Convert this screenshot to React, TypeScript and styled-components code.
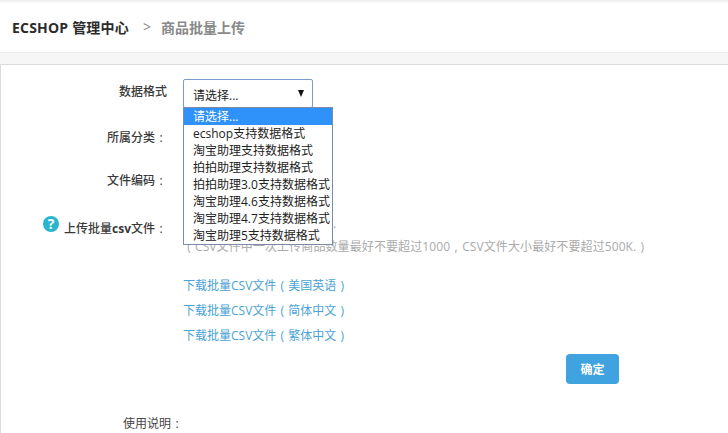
import React from "react";
import styled, { createGlobalStyle } from "styled-components";

const Global = createGlobalStyle`
  html, body { margin: 0; padding: 0; height: 433px; overflow: hidden; background: #f6f6f6; }
  body { font-family: "Open Sans", "Noto Sans CJK SC", sans-serif; font-size: 12px; color: #333; }
  * { box-sizing: border-box; }
`;

const Page = styled.div`
  width: 728px;
  height: 433px;
  padding-top: 2px;
  overflow: hidden;
  border-top: 1px solid #efefef;
`;

const Header = styled.header`
  height: 50px;
  background: #fff;
  border-bottom: 1px solid #efefef;
  display: flex;
  align-items: center;
  padding: 0 0 2px 12px;
  font-size: 14px;
`;

const Brand = styled.strong`
  color: #2b2b2b;
  font-weight: 700;
  letter-spacing: 0.2px;
`;

const Sep = styled.span`
  color: #888;
  margin: 0 10px 0 14px;
  font-weight: 400;
`;

const Crumb = styled.span`
  color: #8a8a8a;
  font-weight: 700;
`;

const Content = styled.main`
  margin-top: 11px;
  height: 380px;
  background: #fff;
  border-top: 1px solid #dcdcdc;
  border-left: 1px solid #dcdcdc;
  padding-top: 14px;
  display: flex;
  flex-direction: column;
`;

const Row = styled.div<{ $h: number }>`
  display: grid;
  grid-template-columns: 166px 1fr;
  column-gap: 16px;
  height: ${(p) => p.$h}px;
  flex-shrink: 0;
  position: relative;
`;

const Label = styled.label`
  text-align: right;
  color: #3a3a3a;
  line-height: 17px;
  font-weight: 500;
  padding-top: 4px;
`;

const Colon = styled.span`
  display: inline-block;
  width: 12px;
  text-align: center;
`;

const Latin = styled.span`
  font-weight: 700;
`;

const PlainLabel = styled(Label)`
  display: flex;
  justify-content: flex-end;
  align-items: center;
  gap: 5px;
  padding-top: 0;
`;

const Help = styled.span`
  width: 16px;
  height: 16px;
  border-radius: 50%;
  background: #2bb6cf;
  color: #fff;
  font-size: 14px;
  font-weight: 700;
  line-height: 16px;
  text-align: center;
  margin-top: -8px;
`;

const Select = styled.div`
  width: 130px;
  height: 29px;
  border: 1px solid #7a9cd3;
  border-radius: 2px;
  background: #fff;
  display: flex;
  justify-content: space-between;
  padding: 7px 8px 0 9px;
  line-height: 17px;
  color: #222;
`;

const Arrow = styled.span`
  width: 0;
  height: 0;
  margin: 3px 0 0 0;
  border-left: 3.5px solid transparent;
  border-right: 3.5px solid transparent;
  border-top: 7px solid #111;
`;

const Menu = styled.ul`
  position: absolute;
  z-index: 2;
  left: 182px;
  top: 28px;
  width: 150px;
  margin: 0;
  padding: 0;
  list-style: none;
  background: #fff;
  border: 1px solid #7f8aa8;
`;

const Option = styled.li<{ $active?: boolean }>`
  height: 17px;
  line-height: 17px;
  padding-left: 9px;
  white-space: nowrap;
  color: ${(p) => (p.$active ? "#fff" : "#222")};
  background: ${(p) => (p.$active ? "#2f92fb" : "transparent")};
`;

const Trail = styled.span`
  padding-left: 150px;
  color: #999;
  line-height: 12px;
`;

const Note = styled.p`
  margin: 0;
  padding-left: 182px;
  height: 39px;
  flex-shrink: 0;
  line-height: 17px;
  color: #aaa;
  white-space: nowrap;
  letter-spacing: 0.1px;
`;

const LinkList = styled.div`
  display: flex;
  flex-direction: column;
  padding-left: 182px;
  height: 77px;
  flex-shrink: 0;
`;

const Download = styled.a`
  height: 25px;
  flex-shrink: 0;
  line-height: 17px;
  color: #4aa3d6;
  text-decoration: none;
  white-space: nowrap;
`;

const Actions = styled.div`
  display: flex;
  padding-left: 565px;
  flex-shrink: 0;
`;

const Submit = styled.button`
  width: 53px;
  height: 30px;
  border: 0;
  border-radius: 4px;
  background: #3fa3df;
  color: #fff;
  font: 700 12px "Open Sans", "Noto Sans CJK SC", sans-serif;
  padding: 0;
`;

const UsageLabel = styled.div`
  margin-top: 31px;
  padding-left: 122px;
  color: #444;
  line-height: 17px;
`;

const options = [
  "请选择...",
  "ecshop支持数据格式",
  "淘宝助理支持数据格式",
  "拍拍助理支持数据格式",
  "拍拍助理3.0支持数据格式",
  "淘宝助理4.6支持数据格式",
  "淘宝助理4.7支持数据格式",
  "淘宝助理5支持数据格式",
];

const links = ["美国英语", "简体中文", "繁体中文"];

export default function App() {
  return (
    <Page>
      <Global />
      <Header>
        <Brand>ECSHOP 管理中心</Brand>
        <Sep>&gt;</Sep>
        <Crumb>商品批量上传</Crumb>
      </Header>
      <Content>
        <Row $h={46}>
          <Label>数据格式</Label>
          <Select>
            <span>请选择...</span>
            <Arrow />
          </Select>
          <Menu>
            {options.map((o, i) => (
              <Option key={o} $active={i === 0}>
                {o}
              </Option>
            ))}
          </Menu>
        </Row>
        <Row $h={43}>
          <Label>
            所属分类<Colon>:</Colon>
          </Label>
        </Row>
        <Row $h={50}>
          <Label>
            文件编码<Colon>:</Colon>
          </Label>
        </Row>
        <Row $h={20}>
          <PlainLabel>
            <Help>?</Help>
            <span>
              上传批量<Latin>csv</Latin>文件<Colon>:</Colon>
            </span>
          </PlainLabel>
          <Trail>.</Trail>
        </Row>
        <Note>
          <Colon>(</Colon>CSV文件中一次上传商品数量最好不要超过1000<Colon>,</Colon>CSV文件大小最好不要超过500K.<Colon>)</Colon>
        </Note>
        <LinkList>
          {links.map((l) => (
            <Download key={l} href="#">
              下载批量CSV文件<Colon>(</Colon>
              {l}
              <Colon>)</Colon>
            </Download>
          ))}
        </LinkList>
        <Actions>
          <Submit type="button">确定</Submit>
        </Actions>
        <UsageLabel>
          使用说明<Colon>:</Colon>
        </UsageLabel>
      </Content>
    </Page>
  );
}
